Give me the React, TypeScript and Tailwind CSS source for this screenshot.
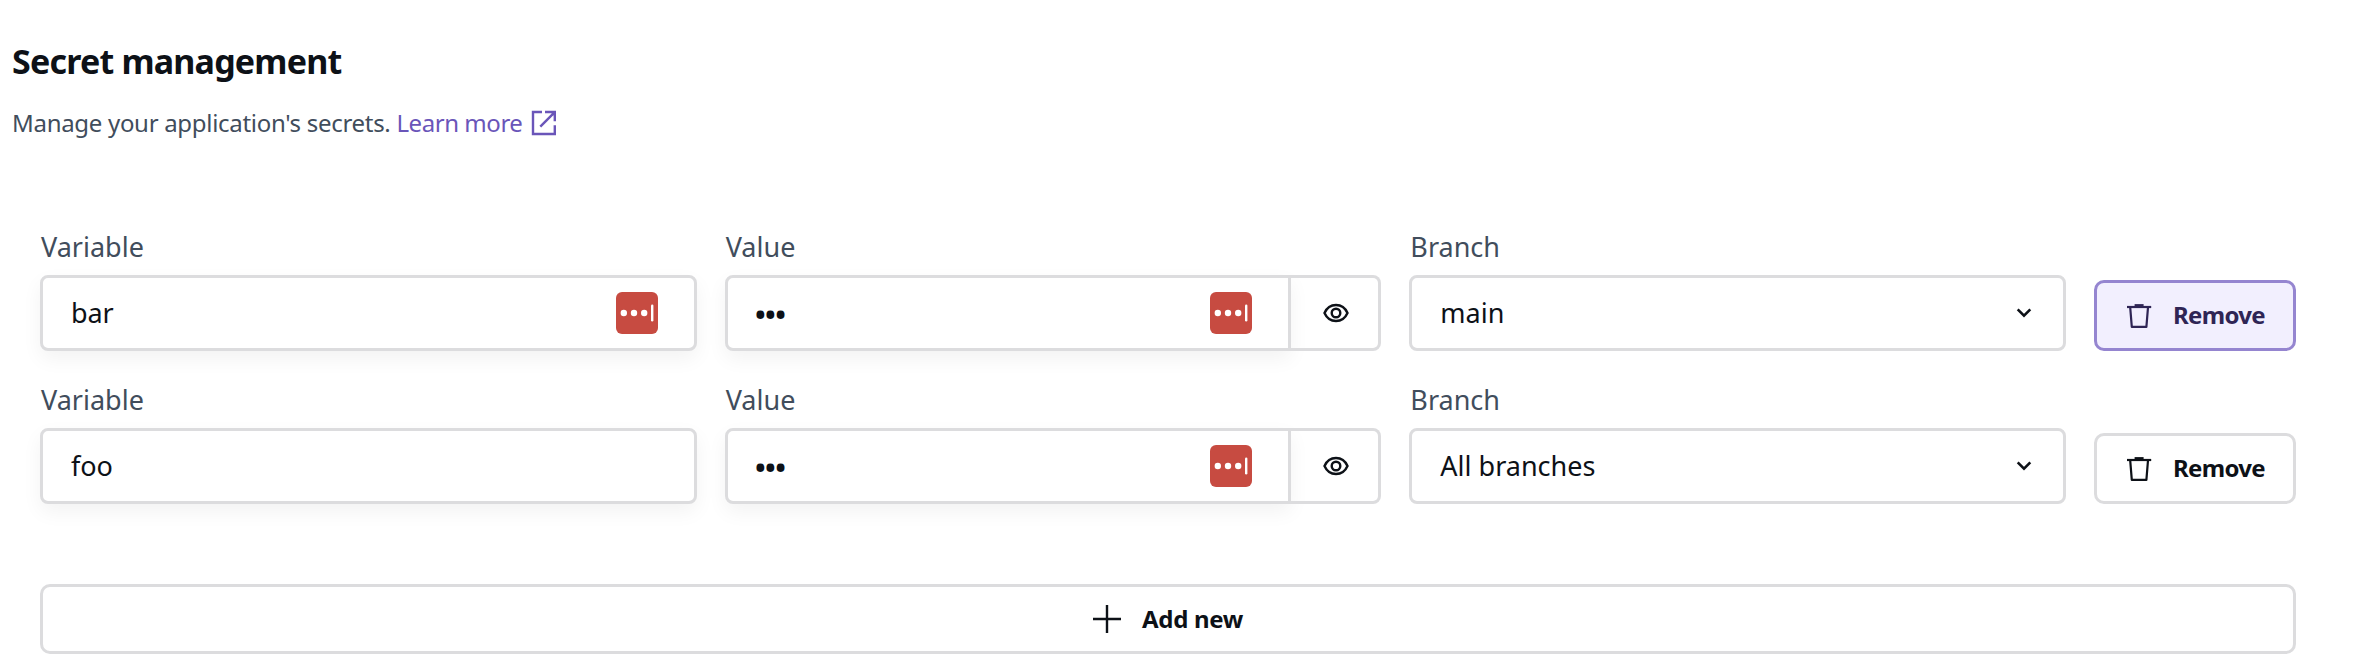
type Row = { variable: string; branch: string; badge: boolean; hovered: boolean };

const rows: Row[] = [
  { variable: 'bar', branch: 'main', badge: true, hovered: true },
  { variable: 'foo', branch: 'All branches', badge: false, hovered: false },
];

function ExternalIcon() {
  return (
    <svg width="26" height="26" viewBox="0 0 26 26" fill="none" stroke="currentColor" strokeWidth="2.4">
      <path d="M11 2H2V24H23.8V15.3M14 2H23.8V11.200M23.500 2.300L9.300 16.700" />
      <path d="M19 1.500H24.300V6.800Z" fill="currentColor" stroke="none" />
    </svg>
  );
}

function TrashIcon() {
  return (
    <svg className="shrink-0" width="26" height="26" viewBox="0 0 26 26" fill="none" stroke="currentColor" strokeWidth="2.2">
      <path d="M1 4H25.200" />
      <path d="M8.600 2.200H17.600" strokeWidth="2.200" />
      <path d="M4.200 4.400L5.800 23.900H20.400L22 4.400" strokeLinejoin="round" />
    </svg>
  );
}

function EyeIcon() {
  return (
    <svg className="ml-0.5" width="26" height="20" viewBox="0 0 26 20" fill="none" stroke="currentColor" strokeWidth="2.400">
      <path d="M1.500 10C3.800 4.800 8.200 2 13 2S22.200 4.800 24.500 10C22.200 15.200 17.800 18 13 18S3.800 15.200 1.500 10Z" />
      <circle cx="13" cy="10" r="4.300" />
    </svg>
  );
}

function ManagerBadge() {
  return (
    <svg width="42" height="42" viewBox="0 0 42 42">
      <rect width="42" height="42" rx="6" fill="#c74b41" />
      <g fill="#fff">
        <circle cx="7.800" cy="21" r="3.200" />
        <circle cx="18" cy="21" r="3.200" />
        <circle cx="28.200" cy="21" r="3.200" />
        <rect x="35" y="12.500" width="2.400" height="17" rx="1.200" />
      </g>
    </svg>
  );
}

function Label({ children }: { children: string }) {
  return <div className="mb-[10px] h-9 pl-px text-[27px] leading-9 text-[#414d5c]">{children}</div>;
}

function SecretRow({ row }: { row: Row }) {
  return (
    <div className="flex items-end gap-7">
      <div className="flex-1">
        <Label>Variable</Label>
        <div className="flex h-[76px] items-center justify-between rounded-lg border-3 border-[#dcdcde] bg-white pr-9 pl-7 shadow-[0_8px_20px_rgba(0,0,0,0.05)]">
          <span className="text-[27px] leading-9 tracking-[-0.1px]">{row.variable}</span>
          {row.badge && <ManagerBadge />}
        </div>
      </div>
      <div className="flex-1">
        <Label>Value</Label>
        <div className="flex h-[76px]">
          <div className="flex flex-1 items-center justify-between rounded-l-lg border-3 border-[#dcdcde] bg-white pr-9 pl-[26px] shadow-[0_8px_20px_rgba(0,0,0,0.05)]">
            <span className="pt-0.5 text-[35px] leading-9 tracking-[-3px]">•••</span>
            <ManagerBadge />
          </div>
          <button className="flex w-[90px] items-center justify-center rounded-r-lg border-3 border-l-0 border-[#dcdcde]">
            <EyeIcon />
          </button>
        </div>
      </div>
      <div className="flex-1">
        <Label>Branch</Label>
        <div className="flex h-[76px] items-center justify-between rounded-lg border-3 border-[#dcdcde] bg-white pr-[31px] pl-7">
          <span className="text-[27px] leading-9">{row.branch}</span>
          <svg width="16" height="10" viewBox="0 0 16 10" fill="none" stroke="currentColor" strokeWidth="2.600">
            <path d="M1.700 1.400L8 7.700L14.300 1.400" />
          </svg>
        </div>
      </div>
      <button
        className={
          row.hovered
            ? 'flex h-[71px] w-[202px] items-center rounded-[10px] border-3 border-[#9585d0] bg-[#f2effe] pl-[29px] text-[#2f2555]'
            : 'flex h-[71px] w-[202px] items-center rounded-[10px] border-3 border-[#dcdcde] bg-white pl-[29px]'
        }
      >
        <TrashIcon />
        <span className="mb-0.5 ml-[21px] text-2xl font-bold tracking-[-0.7px]">Remove</span>
      </button>
    </div>
  );
}

export default function App() {
  return (
    <main className="h-[660px] overflow-hidden bg-white pt-[39px] font-['Noto_Sans',sans-serif] text-[#0d1117]">
      <header className="pl-3">
        <h1 className="text-[34px] leading-[44px] font-bold tracking-[-0.8px]">Secret management</h1>
        <p className="mt-[22px] flex h-9 items-center text-2xl leading-9 tracking-[-0.3px] text-[#414d5c]">
          Manage your application's secrets.
          <a className="ml-[6px] flex items-center gap-[9px] tracking-[-0.45px] text-[#6a55b9]">
            Learn more
            <ExternalIcon />
          </a>
        </p>
      </header>
      <section className="mt-[88px] flex flex-col gap-[31px] pr-[60px] pl-10">
        {rows.map((row) => (
          <SecretRow key={row.variable} row={row} />
        ))}
        <button className="mt-[49px] flex h-[70px] items-center justify-center gap-[21px] rounded-[10px] border-3 border-[#dcdcde] bg-white">
          <svg width="28" height="28" viewBox="0 0 28 28" stroke="currentColor" strokeWidth="2.400">
            <path d="M14 0V28M0 14H28" />
          </svg>
          <span className="text-2xl font-bold tracking-[-0.3px]">Add new</span>
        </button>
      </section>
    </main>
  );
}
